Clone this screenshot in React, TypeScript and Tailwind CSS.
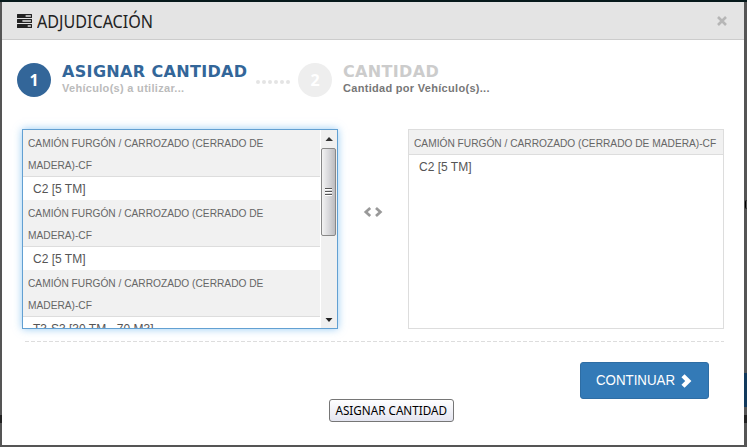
import React from 'react';

const sans = "font-['Liberation_Sans',Arial,sans-serif]";

function TasksIcon() {
  return (
    <svg viewBox="0 0 15 14" className="block h-[14px] w-[15px] fill-[#222]">
      <path
        fillRule="evenodd"
        d="M.5 0h14a.5.5 0 0 1 .5.5v3a.5.5 0 0 1-.5.5H.5a.5.5 0 0 1-.5-.5v-3A.5.5 0 0 1 .5 0zM8.600 1.300v1.400h5.300V1.300zM.5 5h14a.5.5 0 0 1 .5.5v3a.5.5 0 0 1-.5.5H.5a.5.5 0 0 1-.5-.5v-3A.5.5 0 0 1 .5 5zM5.400 6.300v1.400h8.500V6.300zM.5 10h14a.5.5 0 0 1 .5.5v3a.5.5 0 0 1-.5.5H.5a.5.5 0 0 1-.5-.5v-3a.5.5 0 0 1 .5-.5zM10.700 11.300v1.400h3.200v-1.400z"
      />
    </svg>
  );
}

function Group({ lines, option }: { lines: string[]; option: string }) {
  return (
    <div>
      <div className="border-b border-[#ddd] bg-[#f1f1f1] pt-[2px] pl-[5px] text-[11px] leading-[22px] text-[#666]">
        {lines.map((line) => (
          <div key={line} className="w-max origin-left scale-x-[0.926] whitespace-nowrap">{line}</div>
        ))}
      </div>
      <div className="h-[23px] pl-[10px] text-[12px] leading-[25px] whitespace-nowrap text-[#555]">{option}</div>
    </div>
  );
}

function Scrollbar() {
  return (
    <div className="flex w-[16px] shrink-0 flex-col bg-[#f0f0f0]">
      <svg viewBox="0 0 16 18" className="block h-[18px] w-[16px] shrink-0">
        <path d="M4.500 11 8 7l4 4z" fill="#333" />
      </svg>
      <div className="flex h-[88px] w-[15px] shrink-0 flex-col items-center justify-center gap-px rounded-[2px] border border-[#888] bg-gradient-to-r from-[#f3f3f3] via-[#d9d9dc] to-[#bcbcc0]">
        <span className="h-[2px] w-[7px] border-b border-white bg-[#555]" />
        <span className="h-[2px] w-[7px] border-b border-white bg-[#555]" />
        <span className="h-[2px] w-[7px] border-b border-white bg-[#555]" />
      </div>
      <svg viewBox="0 0 16 18" className="mt-auto block h-[18px] w-[16px] shrink-0">
        <path d="M4.500 8h7L8 12z" fill="#222" />
      </svg>
    </div>
  );
}

function Step({ n, title, note, active }: { n: number; title: string; note: string; active?: boolean }) {
  return (
    <div className="flex">
      <div className={`flex h-[34px] w-[34px] shrink-0 items-center justify-center rounded-full font-['Open_Sans',sans-serif] text-[16px] font-bold text-white ${active ? 'bg-[#336699]' : 'bg-[#eeeeee]'}`}>
        {n}
      </div>
      <div className="-mt-px ml-[11px] whitespace-nowrap">
        <div className={`font-['DejaVu_Sans',Verdana,sans-serif] text-[16px] leading-[19px] font-bold tracking-[0.34px] ${active ? 'text-[#336699]' : 'text-[#ccc]'}`}>{title}</div>
        <div className={`text-[11px] leading-[14px] font-bold tracking-[0.3px] ${active ? 'text-[#bbb]' : 'text-[#777]'}`}>{note}</div>
      </div>
    </div>
  );
}

export default function App() {
  const groupLines = ['CAMIÓN FURGÓN / CARROZADO (CERRADO DE', 'MADERA)-CF'];
  return (
    <div className={`relative flex h-[447px] w-[747px] flex-col overflow-hidden bg-[#555] pt-[2px] pr-[3px] pb-[2px] pl-[2px] ${sans}`}>
      <div className="absolute top-0 left-0 h-[2px] w-full bg-[#06191b]" />
      <div className="absolute top-[415px] left-0 h-[8px] w-[2px] bg-[#222]" />
      <div className="absolute top-[373px] right-0 h-[34px] w-[3px] bg-[#123a5d]" />
      <div className="absolute top-[415px] right-0 h-[8px] w-[3px] bg-[#222]" />
      <div className="absolute top-[200px] right-0 h-[9px] w-[2px] rounded-l border-l border-black" />

      <div className="flex flex-1 flex-col bg-white">
        <header className="flex h-[38px] shrink-0 items-center border-b border-[#ccc] bg-[#e4e4e4] pr-[17px] pl-[15px]">
          <TasksIcon />
          <h1 className="ml-[5px] w-max origin-left scale-x-[0.895] font-['Noto_Sans',sans-serif] text-[18px] leading-[22px] whitespace-nowrap text-[#222]">ADJUDICACIÓN</h1>
          <svg viewBox="0 0 10 10" className="ml-auto block h-[10px] w-[10px]">
            <path d="m1 1 8 8M9 1 1 9" stroke="#b6b6b6" strokeWidth="2.6" />
          </svg>
        </header>

        <div className="flex h-[89px] shrink-0 pt-[23px] pl-[15px]">
          <div className="w-[239px]">
            <Step n={1} title="ASIGNAR CANTIDAD" note="Vehículo(s) a utilizar..." active />
          </div>
          <div className="flex w-[42px] gap-[2px] pt-[17px]">
            {[0, 1, 2, 3, 4, 5].map((i) => (
              <span key={i} className="h-[4px] w-[4px] rounded-full bg-[#e4e4e4]" />
            ))}
          </div>
          <Step n={2} title="CANTIDAD" note="Cantidad por Vehículo(s)..." />
        </div>

        <div className="flex h-[200px] shrink-0 pl-[20px]">
          <div className="flex h-[200px] w-[316px] overflow-hidden border border-[#62a0d2] shadow-[0_0_8px_rgba(82,168,236,0.6)]">
            <div className="min-w-0 flex-1 border-r border-white">
              <Group lines={groupLines} option="C2 [5 TM]" />
              <Group lines={groupLines} option="C2 [5 TM]" />
              <Group lines={groupLines} option="T3-S3 [30 TM - 70 M3]" />
            </div>
            <Scrollbar />
          </div>
          <div className="flex w-[70px] justify-center pt-[78px]">
            <svg viewBox="0 0 20 10" className="block h-[10px] w-[20px]" fill="none" stroke="#999" strokeWidth="2.7">
              <path d="M7.200 1 2.800 5l4.400 4M13 1l4.400 4-4.400 4" />
            </svg>
          </div>
          <div className="h-[200px] w-[316px] border border-[#ddd]">
            <Group lines={['CAMIÓN FURGÓN / CARROZADO (CERRADO DE MADERA)-CF']} option="C2 [5 TM]" />
          </div>
        </div>

        <div className="mt-[12px] mr-[20px] ml-[23px] h-px shrink-0 bg-[repeating-linear-gradient(90deg,#ddd_0_4px,transparent_4px_6px)]" />

        <div className="flex justify-end pt-[20px] pr-[35px]">
          <button className="flex h-[37px] w-[129px] items-center rounded-[3px] border border-[#2e6da4] bg-[#337ab7] pl-[15px] text-[14px] text-white">
            <span className="w-[79px] whitespace-nowrap"><span className="inline-block origin-left scale-x-[0.95]">CONTINUAR</span></span>
            <svg viewBox="0 0 12 14" className="ml-[5px] block h-[14px] w-[12px]">
              <path d="m3 1.700 5.300 5.300L3 12.300" fill="none" stroke="#fff" strokeWidth="4.400" />
            </svg>
          </button>
        </div>
      </div>

      <div className="absolute top-[399px] left-[329px] flex h-[23px] w-[125px] items-center justify-center rounded-[3px] border border-[#767676] bg-gradient-to-b from-white to-[#e4e5f0]">
        <span className="scale-x-[0.975] font-['Noto_Sans',sans-serif] text-[12px] leading-[16px] whitespace-nowrap text-black">ASIGNAR CANTIDAD</span>
      </div>
    </div>
  );
}
